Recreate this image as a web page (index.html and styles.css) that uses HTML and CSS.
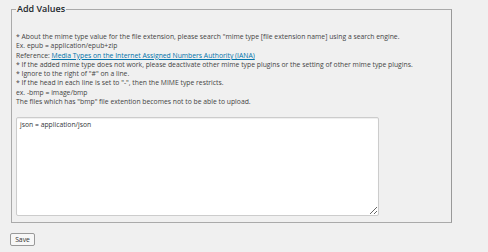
FILE: index.html
```html
<!DOCTYPE html>
<html lang="en">
<head>
    <meta charset="UTF-8">
    <title>Add Values</title>
    <link rel="stylesheet" href="styles.css">
</head>
<body>
<div class="wrap">
    <fieldset class="values">
        <legend>Add Values</legend>
        <div class="notes">
            <div>* About the mime type value for the file extension, please search "mime type [file extension name] using a search engine.</div>
            <div>Ex. epub = application/epub+zip</div>
            <div>Reference: <a href="#">Media Types on the Internet Assigned Numbers Authority (IANA)</a></div>
            <div>* If the added mime type does not work, please deactivate other mime type plugins or the setting of other mime type plugins.</div>
            <div>* Ignore to the right of "#" on a line.</div>
            <div>* If the head in each line is set to "-", then the MIME type restricts.</div>
            <div>ex. -bmp = image/bmp</div>
            <div>The files which has "bmp" file extention becomes not to be able to upload.</div>
        </div>
        <textarea class="mime_list" name="mime_list">json = application/json</textarea>
    </fieldset>
    <button class="save" type="button">Save</button>
</div>
</body>
</html>
```

FILE: styles.css
```css
body {
    margin: 0;
    background-color: #f0f0f0;
    font-family: "Open Sans", "Noto Sans", sans-serif;
    color: #444;
}
.wrap {
    padding: 3px 0 0 11px;
    width: 441px;
}
.values {
    margin: 0;
    padding: 0 4px 6px 4px;
    border: 1px solid #aaa;
    border-right-color: #999;
}
.values legend {
    padding: 0 1px;
    margin-left: 0;
    font-size: 9px;
    font-weight: 600;
    color: #23282d;
    line-height: 12px;
}
.notes {
    margin-top: 17px;
    font-size: 6.8px;
    line-height: 9.3px;
    white-space: nowrap;
}
.notes a {
    color: #0073aa;
}
.mime_list {
    display: block;
    width: 363px;
    height: 99px;
    margin-top: 11px;
    padding: 2px 3px;
    box-sizing: border-box;
    border: 1px solid #ccc;
    border-radius: 2px;
    box-shadow: inset 0 1px 1px rgba(0,0,0,.07);
    background-color: #fff;
    font-family: "Open Sans", "Noto Sans", sans-serif;
    font-size: 6.8px;
    line-height: 10px;
    color: #32373c;
}
.save {
    display: block;
    margin: 10px 0 0 -1px;
    width: 25px;
    height: 13px;
    padding: 0;
    border: 1px solid #999;
    border-radius: 2px;
    background-color: #f7f7f7;
    font-family: "Open Sans", "Noto Sans", sans-serif;
    font-size: 6.8px;
    color: #333;
}
```
